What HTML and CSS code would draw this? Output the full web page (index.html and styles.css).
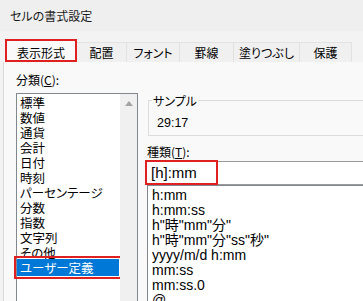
FILE: index.html
```html
<!DOCTYPE html>
<html lang="ja">
<head>
    <meta charset="UTF-8">
    <title>セルの書式設定</title>
    <link rel="stylesheet" href="styles.css">
</head>
<body>
<div class="window">
    <div class="titlebar">セルの書式設定</div>
    <div class="dialog">
        <div class="tabstrip">
            <div class="tab active">表示形式</div>
            <div class="tab tab-align">配置</div>
            <div class="tab tab-font">フォント</div>
            <div class="tab tab-border">罫線</div>
            <div class="tab tab-fill">塗りつぶし</div>
            <div class="tab tab-protect">保護</div>
        </div>
        <div class="panel">
            <div class="col-left">
                <div class="label">分類(<u>C</u>):</div>
                <div class="listbox">
                    <ul class="cat-list">
                        <li>標準</li>
                        <li>数値</li>
                        <li>通貨</li>
                        <li>会計</li>
                        <li>日付</li>
                        <li>時刻</li>
                        <li>パーセンテージ</li>
                        <li>分数</li>
                        <li>指数</li>
                        <li>文字列</li>
                        <li>その他</li>
                        <li class="selected">ユーザー定義</li>
                    </ul>
                    <div class="vscroll"><span class="arrow-up"></span></div>
                </div>
            </div>
            <div class="col-right">
                <fieldset class="sample">
                    <legend>サンプル</legend>
                    <div class="sample-value">29:17</div>
                </fieldset>
                <div class="label type-label">種類(<u>T</u>):</div>
                <div class="type-input"><span class="mark">[h]:mm</span></div>
                <ul class="format-list">
                    <li>h:mm</li>
                    <li>h:mm:ss</li>
                    <li>h"時"mm"分"</li>
                    <li>h"時"mm"分"ss"秒"</li>
                    <li>yyyy/m/d h:mm</li>
                    <li>mm:ss</li>
                    <li>mm:ss.0</li>
                    <li>@</li>
                </ul>
            </div>
        </div>
    </div>
</div>
</body>
</html>
```

FILE: styles.css
```css
body {
    margin: 0;
    width: 363px;
    height: 301px;
    overflow: hidden;
    background: #f0f0f0;
    font-family: "Noto Sans CJK JP", "Liberation Sans", sans-serif;
    font-size: 12px;
    color: #000;
}
.window {
    width: 420px;
    height: 301px;
    display: flex;
    flex-direction: column;
}
.titlebar {
    height: 31px;
    line-height: 31px;
    padding-left: 10px;
    background: #efefef;
    color: #1a1a1a;
    font-feature-settings: "palt";
}
.dialog {
    flex: 1;
    display: flex;
    flex-direction: column;
    padding-left: 3px;
    background: #f3f3f3;
}
.tabstrip {
    height: 31px;
    display: flex;
    align-items: flex-end;
    padding-left: 2px;
    font-feature-settings: "palt";
}
.tab {
    box-sizing: border-box;
    height: 20px;
    line-height: 19px;
    text-align: center;
    background: #f0f0f0;
    border-top: 1px solid #e2e2e2;
    border-right: 1px solid #e2e2e2;
}
.tab.active {
    width: 72px;
    height: 23px;
    line-height: 19px;
    padding-top: 2px;
    background: #f9f9f9;
    border: 2px solid #e02020;
}
.tab-align { width: 50px; }
.tab-font { width: 53px; }
.tab-border { width: 54px; }
.tab-fill { width: 66px; }
.tab-protect { width: 52px; }

.panel {
    flex: 1;
    display: flex;
    gap: 9px;
    padding: 10px 0 0 12px;
    background: #f9f9f9;
    border-left: 1px solid #d9d9d9;
}
.label {
    line-height: 15px;
    font-size: 12px;
}
.col-left {
    width: 122px;
    flex-shrink: 0;
}
.listbox {
    margin-top: 6px;
    height: 230px;
    display: flex;
    border: 1px solid #828790;
    background: #fff;
}
.cat-list {
    flex: 1;
    margin: 0;
    padding: 1px 0 0;
    list-style: none;
    font-size: 12.5px;
    line-height: 15px;
    font-feature-settings: "palt";
}
.cat-list li {
    padding-left: 3px;
}
.cat-list li.selected {
    margin: -1px 0;
    padding-top: 1px;
    padding-bottom: 1px;
    background: #0078d7;
    color: #fff;
    outline: 2px solid #e02020;
    outline-offset: 1px;
}
.vscroll {
    width: 17px;
    margin-left: 1px;
    background: #f0f0f0;
    display: flex;
    justify-content: center;
}
.arrow-up {
    margin-top: 7px;
    width: 0;
    height: 0;
    border-left: 4px solid transparent;
    border-right: 4px solid transparent;
    border-bottom: 5px solid #a3a3a3;
}

.col-right {
    flex: 1;
    min-width: 0;
}
.sample {
    margin: 21px 0 0 1px;
    padding: 0 0 4px 3px;
    border: 1px solid #dcdcdc;
    min-width: 0;
}
.sample legend {
    padding: 0 1px;
    line-height: 15px;
    font-feature-settings: "palt";
}
.sample-value {
    margin-top: 7px;
    padding-left: 5px;
    line-height: 16px;
    font-family: "Liberation Sans", "Noto Sans CJK JP", sans-serif;
    font-size: 12.5px;
}
.type-label {
    margin-top: 8px;
}
.type-input {
    box-sizing: border-box;
    margin: 2px 0 0 -1px;
    height: 24px;
    border: 1px solid #9a9a9a;
    background: #fff;
}
.mark {
    display: inline-block;
    box-sizing: border-box;
    width: 69px;
    height: 21px;
    padding-left: 4px;
    line-height: 21px;
    font-family: "Liberation Sans", "Noto Sans CJK JP", sans-serif;
    font-size: 15px;
    outline: 2px solid #e02020;
}
.format-list {
    margin: 0;
    padding: 2px 0 0 4px;
    height: 130px;
    list-style: none;
    border: 1px solid #828790;
    background: #fff;
    font-family: "Liberation Sans", "Noto Sans CJK JP", sans-serif;
    font-size: 14px;
    line-height: 15px;
}
```
